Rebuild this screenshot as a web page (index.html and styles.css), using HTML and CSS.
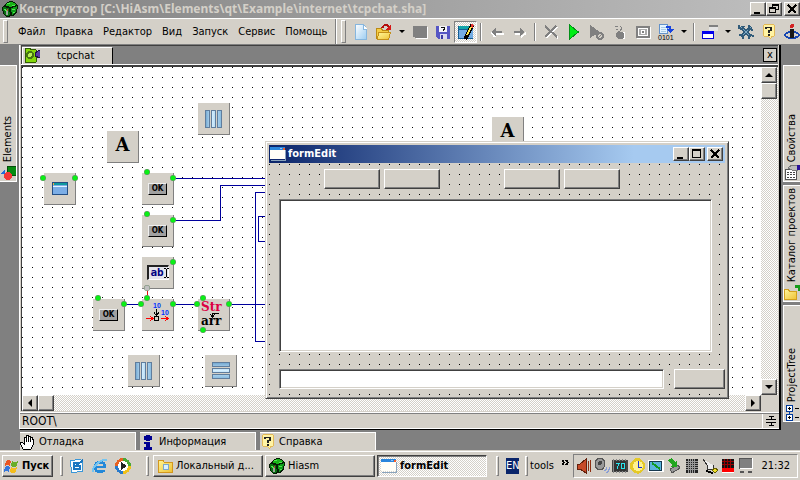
FILE: index.html
```html
<!DOCTYPE html>
<html lang="ru">
<head>
<meta charset="utf-8">
<title>Конструктор</title>
<link rel="stylesheet" href="styles.css">
</head>
<body>
<svg class="defs" aria-hidden="true">
  <defs>
    <linearGradient id="bar" x1="0" x2="1" y1="0" y2="0"><stop offset="0" stop-color="#6fa5cf"/><stop offset=".4" stop-color="#d3eeff"/><stop offset="1" stop-color="#86b9de"/></linearGradient>
    <linearGradient id="rowbar" x1="0" x2="0" y1="0" y2="1"><stop offset="0" stop-color="#6fa5cf"/><stop offset=".5" stop-color="#d3eeff"/><stop offset="1" stop-color="#86b9de"/></linearGradient>
    <linearGradient id="page" x1="0" x2="1" y1="0" y2="1"><stop offset="0" stop-color="#fff"/><stop offset="1" stop-color="#9ccdf2"/></linearGradient>
    <linearGradient id="fold" x1="0" x2="1" y1="0" y2="1"><stop offset="0" stop-color="#fff79b"/><stop offset="1" stop-color="#eec235"/></linearGradient>
    <symbol id="cube" viewBox="0 0 16 16"><path d="M3 3l5-3 5 1 3 4-1 7-4 3-6 1-4-3-1-7z" fill="#041c04"/><path d="M3 4l5-3 5 1 1 2-6 2z" fill="#17b217"/><path d="M9 7l6-2-1 6-4 3z" fill="#0e9a1a"/><path d="M1 6l6 1 1 7-3 1-3-2z" fill="#087010"/><path d="M5 3l3-1M10 4h3M10 9l3-1M11 12l2-1M2 8l3 2" stroke="#4dec4d"/><path d="M4 10h2v4H4z" fill="#9aa79a"/><path d="M5 8v2" stroke="#c33"/></symbol>
    <symbol id="cols" viewBox="0 0 18 18"><path d="M.5.5h4v17h-4zM6.500.5h4v17h-4zM12.500.5h4v17h-4z" fill="url(#bar)" stroke="#5f7d9d"/></symbol>
    <symbol id="rows" viewBox="0 0 18 18"><path d="M.5.5h17v4h-17zM.5 6.500h17v4h-17zM.5 12.500h17v4h-17z" fill="url(#rowbar)" stroke="#5f7d9d"/></symbol>
    <symbol id="winico" viewBox="0 0 16 14"><path d="M0 0h15v12H0z" fill="#fffff8"/><path d="M0 0h15v3H0z" fill="#2a86dc"/><path d="M10 1h2v1h-2z" fill="#8cc4ff"/><path d="M13 1h2v2h-2z" fill="#f0602c"/><path d="M15 3v10H1" fill="none" stroke="#8aa4bc"/></symbol>
    <symbol id="help" viewBox="0 0 16 18"><path d="M2 1h12v13h-3l-1 3-3-3H2z" fill="#fff3a4" stroke="#e3b64a"/><path d="M5 6V4h5v3L8 8v2M8 11v2" fill="none" stroke="#222" stroke-width="2"/></symbol>
    <symbol id="folder" viewBox="0 0 16 14"><path d="M1 1h5l1 2h8v10H1z" fill="url(#fold)" stroke="#d3971d"/></symbol>
  </defs>
</svg>

<div class="app">
  <header class="titlebar">
    <svg class="i16" viewBox="0 0 16 16"><use href="#cube"/></svg>
    <h1>Конструктор [C:\HiAsm\Elements\qt\Example\internet\tcpchat.sha]</h1>
    <div class="winbtns">
      <button aria-label="Свернуть"><svg viewBox="0 0 12 10"><path d="M2 8h6v2H2z"/></svg></button><button aria-label="Восстановить"><svg viewBox="0 0 12 10"><path d="M4 0h7v6H8V5h2V2H5v2H4z"/><path d="M1 3h7v6H1zm1 2v3h5V5z" fill-rule="evenodd"/></svg></button>
      <button class="close" aria-label="Закрыть"><svg viewBox="0 0 12 10"><path d="M2 1l8 8M10 1L2 9" stroke="#000" stroke-width="2"/></svg></button>
    </div>
  </header>

  <div class="toolbar">
    <nav class="menu">
      <button>Файл</button><button>Правка</button><button>Редактор</button><button>Вид</button><button>Запуск</button><button>Сервис</button><button>Помощь</button>
    </nav>
    <div class="tools">
      <button aria-label="Новый"><svg class="i16" viewBox="0 0 16 16"><path d="M2.500.5h8l3 4v11h-11z" fill="url(#page)" stroke="#86b6de"/><path d="M10 1v4h4" fill="#fff" stroke="#86b6de"/></svg></button>
      <button aria-label="Открыть"><svg class="i16" viewBox="0 0 16 16"><path d="M.5 4.500h5l1 2h6v8h-12z" fill="#f5cd45" stroke="#bb8a12"/><path d="M2.500 8.500h12l-2 7h-11z" fill="url(#fold)" stroke="#c5901a"/><path d="M6 4c2-4 5-4 7-1" fill="none" stroke="#b20d0d" stroke-width="2"/><path d="M15 0v6h-6z" fill="#d51616"/></svg></button>
      <button class="drop" aria-label="Список файлов"></button>
      <button aria-label="Закрыть файл"><svg class="i16" viewBox="0 0 16 16"><path d="M2 3h14v12H4v-2H2z" fill="#fff"/><path d="M1 2h14v12H3v-1H1z" fill="#808080"/></svg></button>
      <button aria-label="Сохранить"><svg class="i16" viewBox="0 0 16 16"><path d="M1 2h14v13H3l-2-2z" fill="#5656c4"/><path d="M4 2h8v6H4z" fill="#f4f4f8"/><path d="M5 10h7v5H5z" fill="#d9d9ef"/><path d="M6 11h2v4H6z" fill="#3939a2"/><path d="M6 4V3h3v2H8v2" fill="none" stroke="#111"/></svg></button>
      <button class="pressed" aria-label="Редактор формы"><svg class="i16" viewBox="0 0 16 16"><path d="M0 2h15v13H0z" fill="#135e95"/><path d="M1 2h14v3H1z" fill="#13a5a9"/><path d="M1 6h14v8H1z" fill="#73ace3"/><path d="M14 1L9 12l-2 3" stroke="#000" stroke-width="4"/><path d="M13 3L9 11" stroke="#ffe94c" stroke-width="2"/><path d="M13 0l3 1-1 3-2-1z" fill="#e43333"/></svg></button>
      <span class="sep"></span>
      <button aria-label="Назад"><svg class="i16" viewBox="0 0 16 16"><path d="M6 6l-3 3 3 4M3 10h12" fill="none" stroke="#fff" stroke-width="2"/><path d="M2 8l5-4v3h6v2H7v3z" fill="#808080"/></svg></button>
      <button aria-label="Вперёд"><svg class="i16" viewBox="0 0 16 16"><path d="M9 13l5-4M3 10h6" stroke="#fff" stroke-width="2"/><path d="M13 8L8 4v3H2v2h6v3z" fill="#808080"/></svg></button>
      <span class="sep"></span>
      <button aria-label="Удалить"><svg class="i16" viewBox="0 0 16 16"><path d="M3 3l12 11M14 3L3 14" stroke="#fff" stroke-width="2"/><path d="M2 2l12 11M13 2L2 13" stroke="#808080" stroke-width="2"/></svg></button>
      <button aria-label="Запуск"><svg class="i16" viewBox="0 0 16 16"><path d="M3.500 1v14l9-7z" fill="#00ee16" stroke="#039018"/></svg></button>
      <button aria-label="Стоп"><svg class="i16" viewBox="0 0 16 16"><path d="M1 1v13l10-6z" fill="#808080"/><circle cx="11" cy="12" r="3" fill="#d4d0c8" stroke="#808080" stroke-width="2"/><path d="M9 14l4-4" stroke="#808080"/></svg></button>
      <button aria-label="Отладка"><svg class="i16" viewBox="0 0 16 16"><path d="M5 8h8v7H6l-2-3z" fill="#fff"/><path d="M4 9l3-2 5 2v4l-2 2H6l-2-2z" fill="#808080"/><path d="M8 7l2-3-2-2M3 2h3M4 5h2" fill="none" stroke="#808080"/></svg></button>
      <button aria-label="Сейф"><svg class="i16" viewBox="0 0 16 16"><path d="M2 3h14v12H2z" fill="#fff"/><path d="M1 2h14v12H1z" fill="#808080"/><path d="M3.500 4.500h9v7h-9z" fill="#aaa" stroke="#fff"/><circle cx="8" cy="8" r="2" fill="#808080" stroke="#fff"/></svg></button>
      <button aria-label="Код"><svg class="i16 wide" viewBox="0 0 16 16"><path d="M1.500.5h8v9h-8z" fill="#e4f4ff" stroke="#6392ca"/><path d="M3 3h5M3 5h5M3 7h5" stroke="#a8cce8"/><path d="M8 2h5v3h3l-4 4-3-4h2V4H8z" fill="#1745e0"/><text class="bits" x="0" y="16">0101</text></svg></button>
      <button class="drop" aria-label="Варианты кода"></button>
      <span class="sep"></span>
      <button aria-label="Окна"><svg class="i16" viewBox="0 0 16 16"><path d="M7 1h9v6H7z" fill="#e4e4e4"/><path d="M7 1h9v2H7z" fill="#808080"/><path d="M.5 7.500h11v7H.5z" fill="#fff" stroke="#0000d8"/><path d="M0 7h12v3H0z" fill="#0000ee"/></svg></button>
      <button class="drop" aria-label="Список окон"></button>
      <button aria-label="Настройки"><svg class="i16" viewBox="0 0 16 16"><path d="M3 3l10 10M13 3L3 13" stroke="#315b79" stroke-width="3"/><path d="M3 3l10 10M13 3L3 13" stroke="#7daac6"/><path d="M1 1v3l3 1 2-3M11 1v4l4 1M1 11l4 1v3M11 15l1-4 4 1" fill="none" stroke="#315b79" stroke-width="2"/></svg></button>
      <button aria-label="Справка"><svg class="i16" viewBox="0 0 16 18"><use href="#help"/></svg></button>
      <button aria-label="О программе"><svg class="i16" viewBox="0 0 16 16"><ellipse cx="8" cy="11" rx="7" ry="3" fill="none" stroke="#1546b3" stroke-width="2"/><path d="M6 5h4v9H6z" fill="#171717"/><circle cx="8" cy="2" r="2" fill="#d32222"/></svg></button>
    </div>
  </div>

  <div class="work">
    <aside class="dock left">
      <button class="side"><svg class="i16" viewBox="0 0 16 16"><path d="M7 1h9v9H7z" fill="#078c11" stroke="#034e09"/><path d="M0 9l5-5v5z" fill="#2370dc"/><circle cx="8" cy="11" r="4" fill="#f53838"/></svg><span>Elements</span></button>
    </aside>

    <div class="center">
      <main class="editor">
        <div class="tabs">
          <button class="tab"><svg class="i16" viewBox="0 0 16 16"><path d="M1 0l11 2v12L1 15z" fill="#84d80b" stroke="#315c04"/><circle cx="6" cy="7" r="3" fill="#b9ef55" stroke="#467413" stroke-width="2"/><path d="M11 5l5-3v8l-5-2z" fill="#5a3da4" stroke="#211044"/></svg><span>tcpchat</span></button>
          <button class="tabclose" aria-label="Закрыть вкладку">x</button>
        </div>
        <div class="view">
          <div class="canvas">
            <svg class="wires" width="244" height="329" viewBox="22 67 244 329">
              <path d="M173 178.500h93M173 220.500h47.500v-35H266M266 192.500h-10.500v149H266M266 216.500h-7.500v25h7.500M124 304.500h17M173 304.500h24M229 304.500h37" fill="none" stroke="#00009c"/>
              <path d="M147.500 290v8" stroke="#e01010"/>
            </svg>
            <div class="node n-cols1"><svg class="i18"><use href="#cols"/></svg></div>
            <div class="node n-label1"><b class="letter">A</b></div>
            <div class="node n-label2"><b class="letter">A</b></div>
            <div class="node n-form"><svg class="i16" viewBox="0 0 16 14"><path d="M.5.5h15v12H.5z" fill="#7bade6" stroke="#224e85"/><path d="M1 1h14v2H1z" fill="#0e999e"/><path d="M1 4h14" stroke="#e2f3ff"/><path d="M1 1h1v2H1z" fill="#f5b13b"/></svg></div>
            <div class="node n-ok1"><span class="ok">OK</span></div>
            <div class="node n-ok2"><span class="ok">OK</span></div>
            <div class="node n-edit"><span class="ab">ab<svg viewBox="0 0 5 10" width="5" height="10"><path d="M0 .5h2M3 .5h2M0 9.500h2M3 9.500h2M2.500 1v8" stroke="#000"/></svg></span></div>
            <div class="node n-ok3"><span class="ok">OK</span></div>
            <div class="node n-io"><svg class="io" viewBox="0 0 32 32"><text x="11" y="9">10</text><text x="19" y="16">10</text><path d="M14.500 10v6M12 13.500l2.500 3 2.500-3" fill="none" stroke="#000"/><path d="M12.500 17.500h4v4h-4z" fill="none" stroke="#000"/><path d="M4 19.500h6M8 17l3 2.500L8 22M19 19.500h6M23 17l3 2.500-3 2.500" fill="none" stroke="#f00"/></svg></div>
            <div class="node n-str"><svg class="strarr" viewBox="0 0 32 32"><text class="s" x="3" y="12">Str</text><text x="3" y="26">arr</text><path d="M21 14.500h-6.500v3M12 15l2.500 3 2.500-3" fill="none" stroke="#000"/></svg></div>
            <div class="node n-cols2"><svg class="i18"><use href="#cols"/></svg></div>
            <div class="node n-rows"><svg class="i18"><use href="#rows"/></svg></div>
            <svg class="wires" width="244" height="329" viewBox="22 67 244 329">
              <defs>
                <path id="ports" d="M43 178h.01M75 178h.01M147 172h.01M173 178h.01M147 214h.01M173 220h.01M173 262h.01M98 298h.01M124 304h.01M141 304h.01M147 298h.01M173 304h.01M197 304h.01M203 298h.01M229 304h.01M203 330h.01"/>
              </defs>
              <use class="port rim" href="#ports"/><use class="port" href="#ports"/>
              <path class="port rim" d="M147 288h.01"/><path class="port idle" d="M147 288h.01"/>
            </svg>
          </div>
          <div class="vscroll"><button class="up" aria-label="Вверх"></button><span class="thumb"></span><button class="down" aria-label="Вниз"></button></div>
          <div class="hscroll"><button class="lt" aria-label="Влево"></button><span class="thumb"></span><button class="rt" aria-label="Вправо"></button></div>
          <span class="corner"></span>
        </div>
        <div class="path"><span>ROOT\</span><button aria-label="Разделитель"><svg viewBox="0 0 12 12" width="12" height="12"><path d="M1 4.500h10M1 7.500h10M6.500 1v3M6.500 8v3M4 1.500h5M4 10.500h5" stroke="#000"/></svg></button></div>
      </main>
      <nav class="panels">
        <button><svg class="i16" viewBox="0 0 16 16"><path d="M3 15l-3-6 2-1 2 2V3h2V1h2v1h2v1h2v2h1v6l-2 4z" fill="#fff" stroke="#000"/><path d="M6.500 3v5M8.500 2v6M10.500 3v5" stroke="#000"/></svg>Отладка</button>
        <button><svg class="i16" viewBox="0 0 16 16"><ellipse cx="8" cy="4" rx="4" ry="3" fill="#000090"/><path d="M4 8h6v5h2v3H4v-3h2v-3H4z" fill="#000090"/></svg>Информация</button>
        <button><svg class="i16" viewBox="0 0 16 18"><use href="#help"/></svg>Справка</button>
      </nav>
    </div>

    <aside class="dock right">
      <button class="side"><svg class="i16" viewBox="0 0 16 16"><path d="M1.500 4.500h11v10h-11z" fill="#fff" stroke="#555"/><path d="M3 7h8M3 9h8M3 12h8" stroke="#444" stroke-dasharray="2 1"/><path d="M4 3l4-3h5v5H8z" fill="#bbb" stroke="#777"/><path d="M13 0h3v5h-3z" fill="#28109a"/></svg><span>Свойства</span></button>
      <button class="side"><svg class="i16" viewBox="0 0 16 16"><path d="M.5 4.500h4l1 2h7v8h-12z" fill="url(#fold)" stroke="#d3a11d"/><path d="M11 0h5v6h-2V3h-3z" fill="#159c1b"/></svg><span>Каталог проектов</span></button>
      <button class="side"><svg class="i16" viewBox="0 0 16 16"><path d="M2.500.5h6v6h-6zM2.500 9.500h6v6h-6zM5.500 7v2" fill="#fff" stroke="#003a9c"/><path d="M4 3.500h3M5.500 2v3M4 12.500h3M5.500 11v3M11 3.500h4M11 12.500h4" stroke="#000"/></svg><span>ProjectTree</span></button>
    </aside>
  </div>

  <footer class="taskbar">
    <button class="start"><svg class="i16" viewBox="0 0 16 16"><path d="M2 3q3-2 5 0L6 8Q4 6 1 8z" fill="#e95522"/><path d="M8 3q3 2 6 0l-1 5q-3 2-6 0z" fill="#68ae28"/><path d="M1 9q3-2 5 0l-1 5q-3-2-5 0z" fill="#3576db"/><path d="M7 9q3 2 6 0l-1 5q-3 2-6 0z" fill="#f4bd1c"/></svg>Пуск</button>
    <span class="grip"></span>
    <div class="quick">
      <button aria-label="Рабочий стол"><svg class="i16" viewBox="0 0 16 16"><path d="M1.500 2.500l10-1 2 2v10l-11 1z" fill="#f7fcff" stroke="#3a97d8"/><path d="M10 5H5v6h6V8H7l7-6" fill="none" stroke="#1875c0" stroke-width="2"/></svg></button>
      <button aria-label="Internet Explorer"><svg class="i16" viewBox="0 0 16 16"><circle cx="8" cy="9" r="5" fill="none" stroke="#2388d8" stroke-width="3"/><path d="M4 9h10" stroke="#2388d8" stroke-width="2"/><path d="M1 14C-1 10 9 0 15 2" fill="none" stroke="#74c5f2" stroke-width="2"/><path d="M10 11h5" stroke="#d4d0c8" stroke-width="2"/></svg></button>
      <button aria-label="Проигрыватель"><svg class="i16" viewBox="0 0 16 16"><path d="M8 0a8 8 0 0 0-8 8h8z" fill="#e76221"/><path d="M8 0a8 8 0 0 1 8 8H8z" fill="#4aa736"/><path d="M0 8a8 8 0 0 0 8 8V8z" fill="#287acb"/><path d="M16 8a8 8 0 0 1-8 8V8z" fill="#efc11c"/><circle cx="8" cy="8" r="5" fill="#fff"/><path d="M6 4l6 4-6 4z" fill="#222"/></svg></button>
    </div>
    <span class="grip"></span>
    <button class="task"><svg class="i16" viewBox="0 0 16 14"><use href="#folder"/><circle cx="9" cy="8" r="3" fill="#d9f0ff" stroke="#7ca7c9"/></svg>Локальный д...</button>
    <button class="task"><svg class="i16" viewBox="0 0 16 16"><use href="#cube"/></svg>Hiasm</button>
    <button class="task active"><svg class="i16" viewBox="0 0 16 14"><use href="#winico"/></svg>formEdit</button>
    <span class="grip"></span>
    <button class="lang">EN</button>
    <span class="grip"></span>
    <button class="toolslink">tools</button>
    <button class="more" aria-label="Ещё"><svg viewBox="0 0 8 5" width="8" height="5"><path d="M0 0l2 2.500L0 5M4 0l2 2.500L4 5" fill="none" stroke="#000" stroke-width="2"/></svg></button>
    <div class="tray">
      <svg class="i16" viewBox="0 0 16 16"><path d="M1 6h3l6-5v14l-6-4H1z" fill="#c74b29" stroke="#65200c"/><path d="M12 3v10M14.500 2v12" stroke="#8e2e12" stroke-width="1"/></svg>
      <svg class="i16" viewBox="0 0 16 16"><ellipse cx="6" cy="6" rx="5" ry="6" fill="#999" stroke="#555"/><circle cx="6" cy="5" r="2" fill="#444"/><path d="M10 13q3-1 3-4M12 15q4-2 3-6" fill="none" stroke="#8a9ed5"/></svg>
      <svg class="i16" viewBox="0 0 16 16"><path d="M0 2h16v12H0z" fill="#444"/><path d="M1 1v14M4 1v14M7 1v14M10 1v14M13 1v14" stroke="#888"/><path d="M2 3h12v10H2z" fill="#333"/><path d="M4 5.500h3L5 11M9.500 5.500h3v5h-3z" fill="none" stroke="#28e4ed"/></svg>
      <svg class="i16" viewBox="0 0 16 16"><path d="M5 0h5l1 2 4 3v5l-3 4-4 2-5-2-3-4V5l4-3z" fill="#e5c928"/><circle cx="8" cy="8" r="5" fill="#fff28f"/><path d="M8 3v6h4" fill="none" stroke="#1730d3"/></svg>
      <svg class="i16" viewBox="0 0 16 16"><path d="M0 2h16v12H0z" fill="#fff"/><path d="M1 3h13v10H1z" fill="#17394f"/><path d="M2 4h11v8H2z" fill="#5ab4dc"/><path d="M4 5l8 6" stroke="#109a22" stroke-width="2"/></svg>
      <svg class="i16" viewBox="0 0 16 16"><path d="M4 11l8-4 2 3-8 5z" fill="#999" stroke="#555"/><path d="M2 2l4-2 3 4 2-1v6H4l2-2z" fill="#21a61f"/></svg>
      <svg class="i16" viewBox="0 0 16 16"><path d="M2 1h12v14H2z" fill="#222"/><path d="M2 3.500h12M2 5.500h12M2 7.500h12M2 9.500h12M2 11.500h12M4.500 1v14M6.500 1v14M8.500 1v14M10.500 1v14" stroke="#999"/></svg>
      <svg class="i16" viewBox="0 0 16 16"><path d="M1 1l4 6v4h6V7" fill="#eee" stroke="#333"/><path d="M4 13l7 2" stroke="#000" stroke-width="2"/><path d="M10 12l3-2 3 2-3 3z" fill="#efe028" stroke="#665c00"/></svg>
      <svg class="i16" viewBox="0 0 16 16"><path d="M2 1h12v9H2z" fill="#111"/><path d="M2 10h12v4H2z" fill="#f00"/><path d="M2 3.500h12M2 6.500h12M4.500 1v9M7.500 1v9M10.500 1v9" stroke="#900"/><path d="M2 14.500h12" stroke="#fff"/></svg>
      <svg class="i16" viewBox="0 0 16 16"><path d="M1 0h14v11H1z" fill="#fff"/><path d="M2 1h12v9H2z" fill="#808080"/><path d="M1 .5h13M1.500 1v10" stroke="#555"/><path d="M2 14h4M10 14h4" stroke="#555" stroke-width="2"/></svg>
      <time>21:32</time>
    </div>
  </footer>

  <section class="form" aria-label="formEdit">
    <div class="formtitle">
      <svg class="i16" viewBox="0 0 16 14"><use href="#winico"/></svg>
      <h2>formEdit</h2>
      <div class="winbtns">
        <button aria-label="Свернуть"><svg viewBox="0 0 12 10"><path d="M2 8h6v2H2z"/></svg></button><button aria-label="Развернуть"><svg viewBox="0 0 12 10"><path d="M1 0h9v9H1zm1 2v6h7V2z" fill-rule="evenodd"/></svg></button>
        <button class="close" aria-label="Закрыть"><svg viewBox="0 0 12 10"><path d="M2 1l8 8M10 1L2 9" stroke="#000" stroke-width="2"/></svg></button>
      </div>
    </div>
    <div class="formbody">
      <div class="formbuttons">
        <div class="pair"><button aria-label="Кнопка 1"></button><button aria-label="Кнопка 2"></button></div>
        <div class="pair"><button aria-label="Кнопка 3"></button><button aria-label="Кнопка 4"></button></div>
      </div>
      <textarea aria-label="Чат"></textarea>
      <div class="send"><input type="text" aria-label="Сообщение"><button aria-label="Отправить"></button></div>
    </div>
  </section>
</div>
</body>
</html>
```
FILE: styles.css
```css
:root {
  --face: #d4d0c8;
  --shade: #808080;
  --dark: #404040;
  --dither: repeating-conic-gradient(#fff 0 25%, #d4d0c8 0 50%) 0 0 / 2px 2px;
}
* { box-sizing: border-box; }
body {
  margin: 0;
  font: 11px/14px "DejaVu Sans Condensed", "Liberation Sans", sans-serif;
  color: #000;
}
svg { display: block; flex: none; shape-rendering: crispEdges; }
button { font: inherit; color: inherit; background: none; border: 0; padding: 0; margin: 0; border-radius: 0; }
h1, h2 { margin: 0; font-size: 11px; line-height: 18px; white-space: nowrap; }
.defs { position: absolute; width: 0; height: 0; }
.i16 { width: 16px; height: 16px; }
.i18 { width: 18px; height: 18px; }
.app { position: relative; display: flex; flex-direction: column; height: 100vh; overflow: hidden; background: var(--shade); }

.titlebar { display: flex; align-items: center; height: 18px; padding: 0 0 0 2px; gap: 1px; background: linear-gradient(90deg, #808080, #c0c0c0); color: var(--face); }
.titlebar h1 { flex: 1; min-width: 0; overflow: hidden; font: bold 12px/18px "Noto Sans", sans-serif; }
.winbtns { display: flex; margin-left: auto; }
.winbtns button {
  display: flex; align-items: center; justify-content: center;
  width: 16px; height: 14px; background: var(--face);
  border: 1px solid; border-color: #fff var(--dark) var(--dark) #fff;
  box-shadow: inset -1px -1px var(--shade);
}
.winbtns svg { width: 12px; height: 10px; }
.winbtns .close { margin-left: 2px; }

.toolbar { display: flex; height: 27px; background: var(--face); border-top: 1px solid #fff; border-bottom: 1px solid var(--shade); overflow: hidden; }
.menu, .tools { display: flex; align-items: center; flex: none; }
.menu { padding: 0 8px 0 3px; gap: 10px; border-right: 1px solid var(--shade); }
.menu::before, .tools::before { content: ""; width: 3px; height: 21px; border: 1px solid; border-color: #fff var(--shade) var(--shade) #fff; }
.tools { padding-left: 4px; border-left: 1px solid #fff; }
.tools::before { margin-right: 3px; }
.tools button { display: flex; align-items: center; justify-content: center; width: 23px; height: 22px; }
.tools .drop { width: 13px; }
.drop::before { content: ""; border: 3px solid transparent; border-top-color: #000; border-bottom: 0; }
.tools .pressed { background: var(--dither); border: 1px solid; border-color: var(--shade) #fff #fff var(--shade); }
.sep { width: 2px; height: 18px; margin: 0 3px; border-left: 1px solid var(--shade); border-right: 1px solid #fff; }
.tools .wide { overflow: visible; }
.bits { font: 7px "Liberation Sans", sans-serif; }

.work { flex: 1; min-height: 0; display: flex; }
.dock { display: flex; flex-direction: column; gap: 3px; padding-top: 20px; overflow: hidden; flex: none; }
.dock.left { width: 19px; padding-right: 2px; }
.dock.right { width: 19px; padding-left: 2px; }
.side { display: flex; flex-direction: column-reverse; align-items: center; gap: 3px; height: 117px; background: var(--face); border: 1px solid #fff; }
.left .side { border-left: 0; }
.right .side { border-right: 0; }
.side span { writing-mode: vertical-rl; transform: rotate(180deg); white-space: nowrap; }

.center { flex: 1; min-width: 0; display: flex; flex-direction: column; }
.editor { flex: 1; min-height: 0; display: flex; flex-direction: column; background: var(--face); border-left: 1px solid #fff; border-right: 2px solid #000; border-bottom: 1px solid #000; }
.tabs { display: flex; align-items: flex-end; justify-content: space-between; height: 19px; margin: 0 1px; padding-right: 1px; background: var(--shade); border-top: 1px solid var(--dark); border-left: 1px solid var(--dark); }
.tab { display: flex; align-items: center; gap: 17px; width: 91px; height: 17px; padding-left: 1px; background: var(--face); border: 1px solid #fff; border-right-color: #000; border-bottom: 0; }
.tabclose { align-self: center; width: 14px; height: 14px; line-height: 10px; background: var(--face); border: 1px solid #000; }
.view { flex: 1; min-height: 0; margin: 1px 1px 0; border-top: 2px solid var(--dark); border-left: 1px solid var(--dark); display: grid; grid-template: 1fr 16px / 1fr 17px; box-shadow: 0 -1px #fff; }
.canvas { position: relative; overflow: hidden; background: conic-gradient(from 270deg at 1px 1px, #000 90deg, #fff 0) 0 0 / 10px 10px; }
.wires { position: absolute; left: 0; top: 0; }
.port { fill: none; stroke: #0bef17; stroke-width: 5px; stroke-linecap: round; shape-rendering: auto; }
.rim { stroke: #6f8a6f; stroke-width: 6px; }
.idle { stroke: #c0c0c0; }
.node { position: absolute; display: flex; align-items: center; justify-content: center; width: 32px; height: 32px; background: var(--face); border-right: 1px solid var(--shade); border-bottom: 1px solid var(--shade); }
.n-cols1 { left: 176px; top: 36px; }
.n-label1 { left: 85px; top: 64px; }
.n-label2 { left: 470px; top: 50px; }
.n-form { left: 22px; top: 106px; }
.n-ok1 { left: 120px; top: 106px; }
.n-ok2 { left: 120px; top: 148px; }
.n-edit { left: 120px; top: 190px; }
.n-ok3 { left: 71px; top: 232px; }
.n-io { left: 120px; top: 232px; }
.n-str { left: 176px; top: 232px; }
.n-cols2 { left: 106px; top: 288px; }
.n-rows { left: 183px; top: 288px; }
.letter { font: bold 18px/24px "DejaVu Serif", serif; padding-bottom: 4px; }
.ok { width: 19px; height: 12px; font: bold 8px/10px "DejaVu Sans Condensed", sans-serif; text-align: center; background: #a0a0a0; border: 1px solid; border-color: #eee #000 #000 #eee; }
.ab { display: flex; align-items: center; width: 22px; height: 15px; padding-left: 2px; font: bold 11px/12px "DejaVu Sans Mono", monospace; color: #000080; background: #e4e4ec; border: 1px solid #fff; border-top: 2px solid #222; border-left: 2px solid #222; }
.io, .strarr { width: 32px; height: 32px; }
.io text { font: bold 7px "Liberation Sans", sans-serif; fill: #0030ff; }
.strarr text { font: bold 12px "DejaVu Serif", serif; }
.strarr .s { fill: #dc0043; }

.vscroll, .hscroll { display: flex; background: var(--dither); }
.vscroll { flex-direction: column; }
.hscroll button, .vscroll button, .thumb {
  display: flex; align-items: center; justify-content: center;
  width: 16px; height: 16px; background: var(--face);
  border: 1px solid; border-color: #fff var(--dark) var(--dark) #fff;
  box-shadow: inset -1px -1px var(--shade);
}
.vscroll .down { margin-top: auto; }
.hscroll .rt { margin-left: auto; }
.up::before, .down::before, .lt::before, .rt::before { content: ""; border: 4px solid transparent; }
.up::before { border-bottom-color: #000; border-top: 0; }
.down::before { border-top-color: #000; border-bottom: 0; }
.lt::before { border-right-color: #000; border-left: 0; }
.rt::before { border-left-color: #000; border-right: 0; }
.corner { background: var(--face); }
.path { display: flex; align-items: center; justify-content: space-between; height: 16px; margin-top: 2px; padding-left: 2px; font-size: 12px; border-top: 1px solid var(--shade); border-bottom: 1px solid #fff; box-shadow: 0 -1px #fff; }
.path button { display: flex; align-items: center; justify-content: center; width: 17px; height: 14px; border-left: 1px solid #fff; }
.panels { display: flex; gap: 4px; height: 20px; padding: 2px 0 0 1px; flex: none; }
.panels button { display: flex; align-items: center; gap: 3px; width: 116px; background: var(--face); border: 1px solid #fff; border-bottom: 0; border-left: 0; text-align: left; }

.taskbar { display: flex; align-items: center; height: 30px; flex: none; padding: 2px 2px 0; background: var(--face); box-shadow: inset 0 1px var(--face), inset 0 2px #fff; }
.start, .task { display: flex; align-items: center; gap: 3px; height: 22px; border: 1px solid; border-color: #fff var(--dark) var(--dark) #fff; box-shadow: inset -1px -1px var(--shade); white-space: nowrap; }
.start { width: 51px; padding-left: 1px; font-weight: bold; gap: 2px; }
.task { width: 110px; padding-left: 3px; margin-right: 2px; }
.task.active { font-weight: bold; background: var(--dither); border-color: var(--dark) #fff #fff var(--dark); box-shadow: inset 1px 1px var(--shade); }
.grip { width: 3px; height: 20px; margin: 0 4px 0 7px; border: 1px solid; border-color: #fff var(--shade) var(--shade) #fff; flex: none; }
.quick { display: flex; gap: 7px; margin: 0 8px 0 2px; }
.lang { width: 13px; height: 16px; overflow: hidden; background: #0a246a; color: #fff; margin-left: 3px; }
.lang + .grip { margin-left: 6px; margin-right: 2px; }
.more { margin: 0 0 8px 8px; }
.tray { display: flex; align-items: center; gap: 2px; height: 24px; margin-left: auto; padding: 0 7px 0 2px; border: 1px solid; border-color: var(--shade) #fff #fff var(--shade); }
.tray time { margin-left: 5px; }

.form {
  position: absolute; left: 265px; top: 141px; right: 71px; bottom: 81px;
  display: flex; flex-direction: column; padding: 3px; background: var(--face);
  border: 1px solid; border-color: var(--face) var(--dark) var(--dark) var(--face);
  box-shadow: inset 1px 1px #fff, inset -1px -1px var(--shade);
}
.formtitle { display: flex; align-items: center; gap: 2px; height: 18px; flex: none; padding: 0 2px 0 1px; background: linear-gradient(90deg, #0a246a, #a6caf0 80%); color: #fff; }
.formbody { flex: 1; min-height: 0; display: flex; flex-direction: column; padding: 6px 0 6px 10px; background: conic-gradient(from 270deg at 1px 1px, #000 90deg, var(--face) 0) 0 1px / 10px 10px; }
.formbuttons { display: flex; gap: 64px; padding-left: 45px; }
.pair { display: flex; gap: 4px; }
.formbody button { width: 56px; height: 20px; background: var(--face); border: 1px solid; border-color: #fff var(--dark) var(--dark) #fff; box-shadow: inset -1px -1px var(--shade); }
.formbody textarea, .formbody input { display: block; margin: 0; padding: 2px; font: inherit; border: 1px solid; border-color: var(--shade) #fff #fff var(--shade); border-radius: 0; outline: 0; background: #fff; resize: none; box-shadow: inset 1px 1px var(--dark), inset -1px -1px var(--face); }
.formbody textarea { flex: 1; margin: 10px 13px 17px 0; }
.send { display: flex; gap: 10px; }
.send input { flex: 1; min-width: 0; height: 20px; }
.formbody .send button { width: 51px; }
```
